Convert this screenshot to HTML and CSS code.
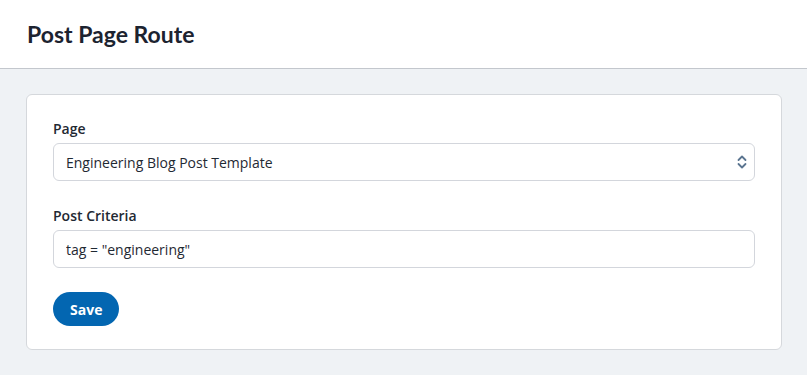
FILE: index.html
```html
<!DOCTYPE html>
<html lang="en">
<head>
    <meta charset="UTF-8">
    <meta name="viewport" content="width=device-width, initial-scale=1.0">
    <title>Post Page Route</title>
    <link rel="stylesheet" href="styles.css">
</head>
<body>
    <header class="page-header">
        <h1>Post Page Route</h1>
    </header>

    <main class="content">
        <form class="card">
            <div class="form-group">
                <label for="pageSelect">Page</label>
                <div class="select-wrap">
                    <select id="pageSelect">
                        <option>Engineering Blog Post Template</option>
                    </select>
                    <svg class="select-icon" width="10" height="14" viewBox="0 0 10 14">
                        <path d="M1.5 5 L5 1.5 L8.5 5 M1.5 9 L5 12.5 L8.5 9" fill="none" stroke="#5b7590" stroke-width="1.8" stroke-linecap="round" stroke-linejoin="round"/>
                    </svg>
                </div>
            </div>

            <div class="form-group">
                <label for="criteria">Post Criteria</label>
                <input id="criteria" type="text" value='tag = "engineering"'>
            </div>

            <button type="button" class="btn-save">Save</button>
        </form>
    </main>
</body>
</html>
```

FILE: styles.css
```css
body {
    margin: 0;
    font-family: "Open Sans", Arial, sans-serif;
    background-color: #eff2f5;
    color: #1f2933;
}
.page-header {
    background: #fff;
    height: 68px;
    border-bottom: 1px solid #c3c7cd;
    padding: 0 27px;
    display: flex;
    align-items: center;
}
.page-header h1 {
    margin: 0;
    font-family: Lato, "Noto Sans", sans-serif;
    font-size: 23px;
    font-weight: 700;
    color: #1c2330;
}
.content {
    padding: 25px 25px 25px 26px;
}
.card {
    background: #fff;
    border: 1px solid #d5d8dc;
    border-radius: 6px;
    padding: 24px 26px 23px;
}
.form-group {
    margin-bottom: 25px;
}
.form-group + .form-group {
    margin-bottom: 24px;
}
label {
    display: block;
    font-size: 14px;
    font-weight: 600;
    line-height: 20px;
    margin-bottom: 4px;
    color: #1f2933;
}
.select-wrap {
    position: relative;
}
select, input {
    display: block;
    width: 100%;
    box-sizing: border-box;
    height: 38px;
    padding: 0 12px;
    font-family: "Open Sans", Arial, sans-serif;
    font-size: 14px;
    color: #1f2933;
    background: #fff;
    border: 1px solid #d3d6dc;
    border-radius: 6px;
    outline: none;
}
select {
    appearance: none;
    -webkit-appearance: none;
}
.select-icon {
    position: absolute;
    right: 8px;
    top: 12px;
    pointer-events: none;
}
.btn-save {
    height: 34px;
    padding: 0 17px;
    border: none;
    border-radius: 17px;
    background-color: #0366b1;
    color: #fff;
    font-family: "Open Sans", Arial, sans-serif;
    font-size: 14px;
    font-weight: 700;
    cursor: pointer;
}
```
